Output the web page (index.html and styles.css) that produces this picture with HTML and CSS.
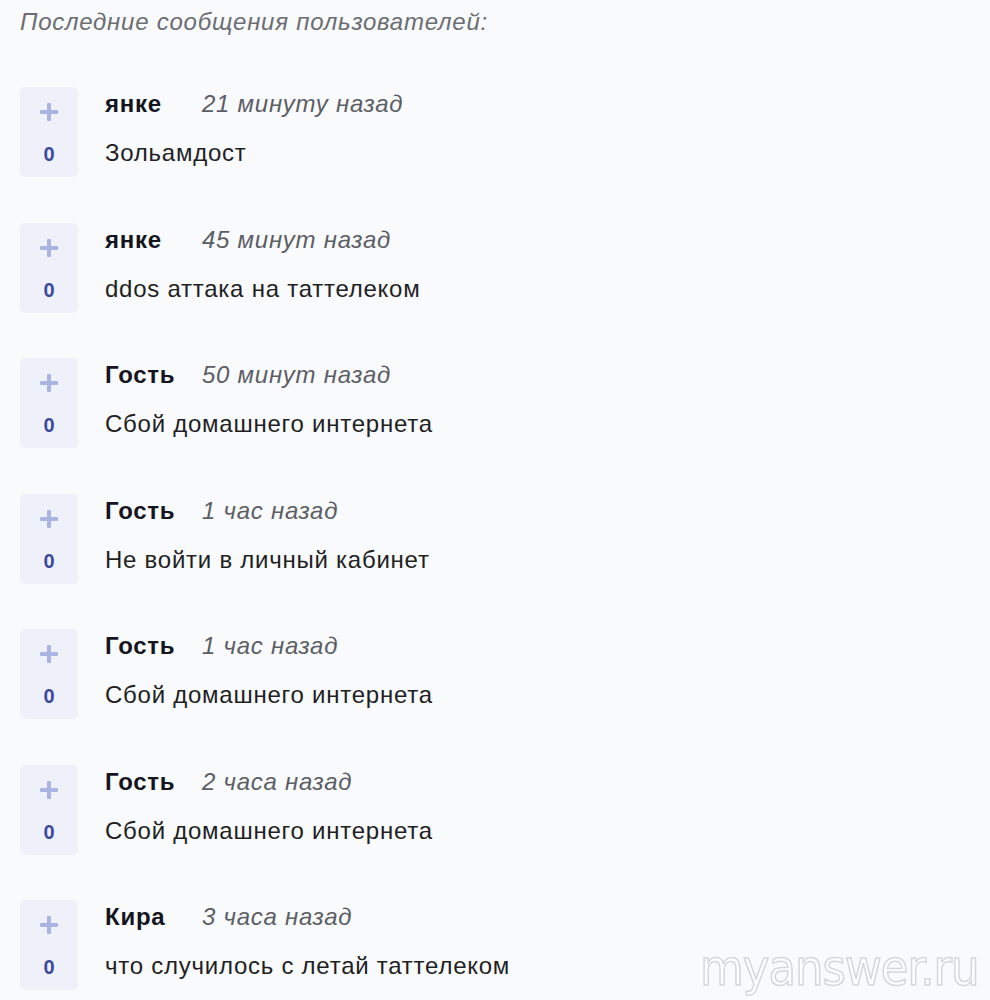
FILE: index.html
```html
<!DOCTYPE html>
<html lang="ru">
<head>
<meta charset="utf-8">
<link rel="stylesheet" href="styles.css">
</head>
<body>
<div class="page">
  <div class="title">Последние сообщения пользователей:</div>
  <div class="list">
    <div class="item">
      <div class="vote"><span class="plus"></span><span class="count">0</span></div>
      <div class="content">
        <div class="meta"><span class="name">янке</span><span class="time">21 минуту назад</span></div>
        <div class="text">Зольамдост</div>
      </div>
    </div>
    <div class="item">
      <div class="vote"><span class="plus"></span><span class="count">0</span></div>
      <div class="content">
        <div class="meta"><span class="name">янке</span><span class="time">45 минут назад</span></div>
        <div class="text">ddos аттака на таттелеком</div>
      </div>
    </div>
    <div class="item">
      <div class="vote"><span class="plus"></span><span class="count">0</span></div>
      <div class="content">
        <div class="meta"><span class="name">Гость</span><span class="time">50 минут назад</span></div>
        <div class="text">Сбой домашнего интернета</div>
      </div>
    </div>
    <div class="item">
      <div class="vote"><span class="plus"></span><span class="count">0</span></div>
      <div class="content">
        <div class="meta"><span class="name">Гость</span><span class="time">1 час назад</span></div>
        <div class="text">Не войти в личный кабинет</div>
      </div>
    </div>
    <div class="item">
      <div class="vote"><span class="plus"></span><span class="count">0</span></div>
      <div class="content">
        <div class="meta"><span class="name">Гость</span><span class="time">1 час назад</span></div>
        <div class="text">Сбой домашнего интернета</div>
      </div>
    </div>
    <div class="item">
      <div class="vote"><span class="plus"></span><span class="count">0</span></div>
      <div class="content">
        <div class="meta"><span class="name">Гость</span><span class="time">2 часа назад</span></div>
        <div class="text">Сбой домашнего интернета</div>
      </div>
    </div>
    <div class="item">
      <div class="vote"><span class="plus"></span><span class="count">0</span></div>
      <div class="content">
        <div class="meta"><span class="name">Кира</span><span class="time">3 часа назад</span></div>
        <div class="text">что случилось с летай таттелеком</div>
      </div>
    </div>
  </div>
</div>
<div class="watermark">myanswer.ru</div>
</body>
</html>
```
FILE: styles.css
```css
html, body {
  margin: 0;
  padding: 0;
  background: #f9fafc;
}
body {
  font-family: "Liberation Sans", Arial, sans-serif;
  color: #1f1f24;
  width: 990px;
  height: 1000px;
  overflow: hidden;
  position: relative;
}
.page {
  padding: 9px 0 0 20px;
}
.title {
  font-size: 24px;
  line-height: 26px;
  letter-spacing: 0.75px;
  font-style: italic;
  color: #6b6d73;
}
.list {
  display: flex;
  flex-direction: column;
  gap: 45.5px;
  margin-top: 52px;
}
.item {
  display: flex;
  align-items: flex-start;
}
.vote {
  width: 58px;
  height: 90px;
  background: #eef1fa;
  border-radius: 5px;
  display: flex;
  flex-direction: column;
  align-items: center;
  padding-top: 16px;
  box-sizing: border-box;
  flex-shrink: 0;
}
.plus {
  width: 18px;
  height: 18px;
  position: relative;
  display: block;
}
.plus::before, .plus::after {
  content: "";
  position: absolute;
  background: #aab4e2;
  border-radius: 1px;
}
.plus::before {
  left: 0;
  top: 7px;
  width: 18px;
  height: 4px;
}
.plus::after {
  left: 7px;
  top: 0;
  width: 4px;
  height: 18px;
}
.count {
  margin-top: 21px;
  font-size: 20px;
  line-height: 24px;
  font-weight: bold;
  color: #3d4a9e;
}
.content {
  margin-left: 27px;
}
.meta {
  display: flex;
  font-size: 24px;
  line-height: 34px;
  letter-spacing: 0.75px;
}
.name {
  width: 97px;
  font-weight: bold;
  color: #15151f;
}
.time {
  font-style: italic;
  color: #5c5e66;
}
.text {
  margin-top: 15px;
  font-size: 24px;
  line-height: 34px;
  letter-spacing: 0.75px;
  color: #1f1f24;
}
.watermark {
  position: absolute;
  left: 700px;
  top: 941px;
  font-family: "DejaVu Sans Condensed", "DejaVu Sans", sans-serif;
  font-stretch: condensed;
  font-size: 50px;
  line-height: 54px;
  color: #ffffff;
  -webkit-text-stroke: 1.5px #d6d7db;
  letter-spacing: -1px;
}
```
